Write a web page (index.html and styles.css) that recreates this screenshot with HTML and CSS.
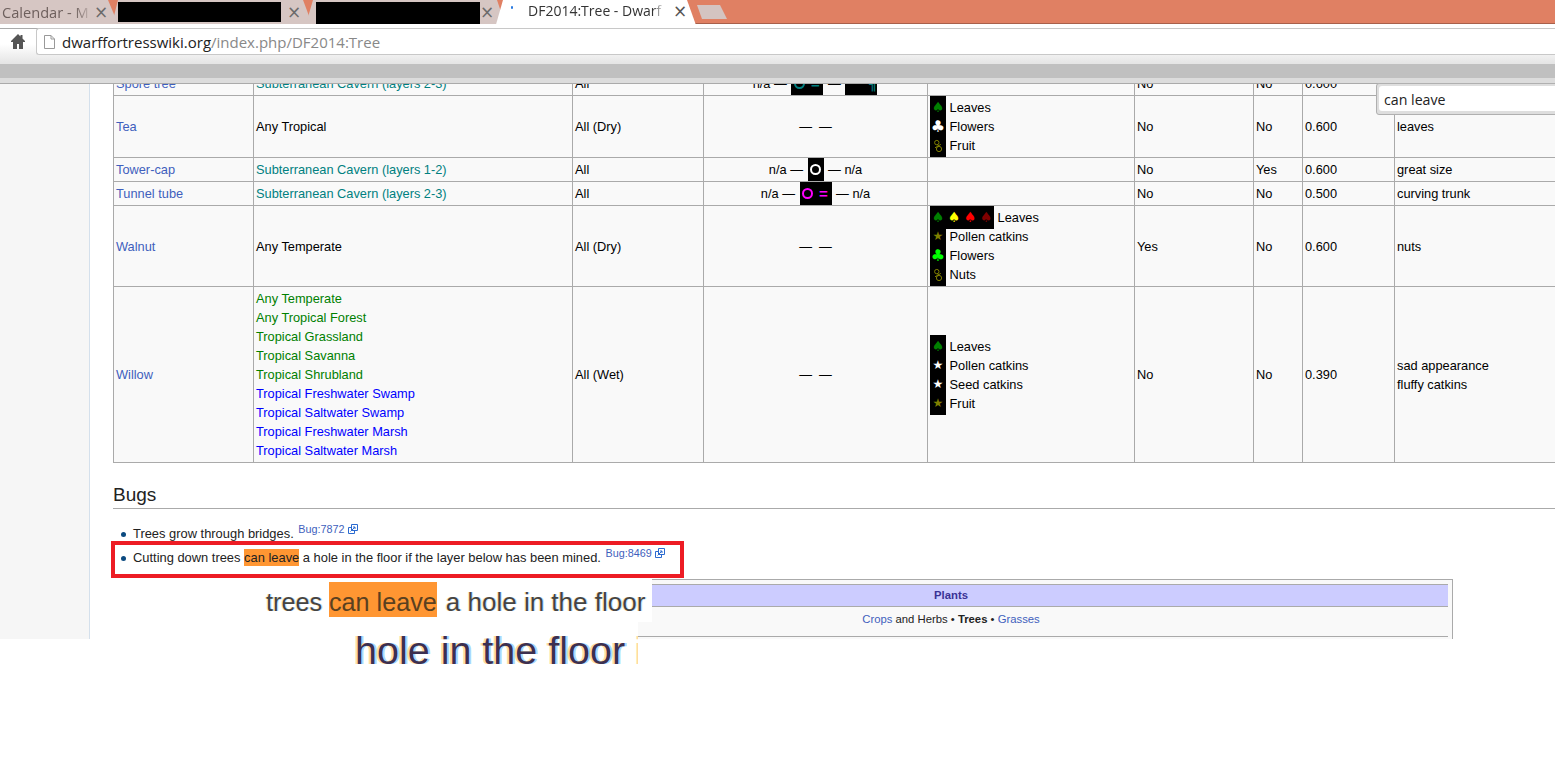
FILE: index.html
```html
<!DOCTYPE html>
<html lang="en">
<head>
<meta charset="utf-8">
<title>DF2014:Tree - Dwarf Fortress Wiki</title>
<link rel="stylesheet" href="styles.css">
</head>
<body>
<header class="tabstrip">
  <div class="tab tab-first"><span class="tab-title tab-title-short">Calendar - M</span><span class="tab-x">×</span></div>
  <div class="tab tab-second"><span class="redact redact-a"></span><span class="tab-x">×</span></div>
  <div class="tab tab-third"><span class="redact redact-b"></span><span class="tab-x">×</span></div>
  <div class="tab tab-active"><span class="spinner"></span><span class="tab-title tab-title-active">DF2014:Tree - Dwarf</span><span class="tab-x tab-x-active">×</span></div>
  <div class="newtab"></div>
</header>
<nav class="toolbar">
  <svg class="home" viewBox="0 0 14 15" width="14" height="15"><path d="M7 0 0 7v1h2v7h4v-5h2v5h4V8h2V7l-2.500-2.500V1H9.500v1.500z" fill="#555"/></svg>
  <div class="omnibox">
    <svg class="doc" viewBox="0 0 11 14" width="11" height="14"><path d="M.5.500h6.500l3.500 3.500v9.500h-10z M7 .5v3.500h3.500" fill="#fff" stroke="#999"/></svg>
    <span class="url"><span class="url-host">dwarffortresswiki.org</span>/index.php/DF2014:Tree</span>
  </div>
</nav>
<div class="barband"></div>
<main class="page">
  <aside class="sidebar"></aside>
  <div class="content">
    <table class="trees">
      <colgroup><col class="c1"><col class="c2"><col class="c3"><col class="c4"><col class="c5"><col class="c6"><col class="c7"><col class="c8"><col class="c9"></colgroup>
      <tr>
        <td><a class="lnk">Spore tree</a></td><td class="teal">Subterranean Cavern (layers 2-3)</td><td>All</td>
        <td class="ctr">n/a — <span class="tiles t-teal"><span class="cell"><span class="ring"></span></span><span class="cell eq">=</span></span> — <span class="tiles t-teal wide"><span class="cell"></span><span class="cell end">╣</span></span></td>
        <td></td><td>No</td><td>No</td><td>0.600</td><td></td>
      </tr>
      <tr>
        <td><a class="lnk">Tea</a></td><td>Any Tropical</td><td>All (Dry)</td><td class="ctr">— &nbsp;—</td>
        <td>
          <div><span class="tiles"><span class="cell g-green">♠</span></span> Leaves</div>
          <div><span class="tiles"><span class="cell club g-white">♣</span></span> Flowers</div>
          <div><span class="tiles"><span class="cell"><svg class="fruit" viewBox="0 0 10 14" width="10" height="14"><circle cx="3.800" cy="3.600" r="2.200"/><circle cx="6" cy="10" r="2.600"/><path d="M4.600 5.600 5.800 7.400M2 8.800 7.800 5.400"/></svg></span></span> Fruit</div>
        </td>
        <td>No</td><td>No</td><td>0.600</td><td>leaves</td>
      </tr>
      <tr>
        <td><a class="lnk">Tower-cap</a></td><td class="teal">Subterranean Cavern (layers 1-2)</td><td>All</td>
        <td class="ctr">n/a — <span class="tiles t-white"><span class="cell"><span class="ring"></span></span></span> — n/a</td>
        <td></td><td>No</td><td>Yes</td><td>0.600</td><td>great size</td>
      </tr>
      <tr>
        <td><a class="lnk">Tunnel tube</a></td><td class="teal">Subterranean Cavern (layers 2-3)</td><td>All</td>
        <td class="ctr">n/a — <span class="tiles t-magenta"><span class="cell"><span class="ring"></span></span><span class="cell eq">=</span></span> — n/a</td>
        <td></td><td>No</td><td>No</td><td>0.500</td><td>curving trunk</td>
      </tr>
      <tr>
        <td><a class="lnk">Walnut</a></td><td>Any Temperate</td><td>All (Dry)</td><td class="ctr">— &nbsp;—</td>
        <td>
          <div><span class="tiles"><span class="cell g-green">♠</span><span class="cell g-yellow">♠</span><span class="cell g-red">♠</span><span class="cell g-maroon">♠</span></span> Leaves</div>
          <div><span class="tiles"><span class="cell star g-olive">★</span></span> Pollen catkins</div>
          <div><span class="tiles"><span class="cell club g-lime">♣</span></span> Flowers</div>
          <div><span class="tiles"><span class="cell"><svg class="fruit" viewBox="0 0 10 14" width="10" height="14"><circle cx="3.800" cy="3.600" r="2.200"/><circle cx="6" cy="10" r="2.600"/><path d="M4.600 5.600 5.800 7.400M2 8.800 7.800 5.400"/></svg></span></span> Nuts</div>
        </td>
        <td>Yes</td><td>No</td><td>0.600</td><td>nuts</td>
      </tr>
      <tr>
        <td><a class="lnk">Willow</a></td>
        <td>
          <div class="green">Any Temperate</div>
          <div class="green">Any Tropical Forest</div>
          <div class="green">Tropical Grassland</div>
          <div class="green">Tropical Savanna</div>
          <div class="green">Tropical Shrubland</div>
          <div class="blue">Tropical Freshwater Swamp</div>
          <div class="blue">Tropical Saltwater Swamp</div>
          <div class="blue">Tropical Freshwater Marsh</div>
          <div class="blue">Tropical Saltwater Marsh</div>
        </td>
        <td>All (Wet)</td><td class="ctr">— &nbsp;—</td>
        <td>
          <div><span class="tiles"><span class="cell g-green">♠</span></span> Leaves</div>
          <div><span class="tiles"><span class="cell star g-white">★</span></span> Pollen catkins</div>
          <div><span class="tiles"><span class="cell star g-white">★</span></span> Seed catkins</div>
          <div><span class="tiles"><span class="cell star g-olive">★</span></span> Fruit</div>
        </td>
        <td>No</td><td>No</td><td>0.390</td><td><div>sad appearance</div><div>fluffy catkins</div></td>
      </tr>
    </table>
    <h2 class="section">Bugs</h2>
    <ul class="bugs">
      <li>Trees grow through bridges. <sup class="ref"><a class="lnk">Bug:7872</a> <svg class="ext" viewBox="0 0 10 10" width="10" height="10"><path d="M3.500.5h6v6h-6zM.5 3.500h3M.5 3.500v6h6v-3M2.500 7.500l4.500-4.500M5 3h2v2" fill="none" stroke="#2a6ad0"/></svg></sup></li>
      <li>Cutting down trees <mark class="hit">can leave</mark> a hole in the floor if the layer below has been mined. <sup class="ref"><a class="lnk">Bug:8469</a> <svg class="ext" viewBox="0 0 10 10" width="10" height="10"><path d="M3.500.5h6v6h-6zM.5 3.500h3M.5 3.500v6h6v-3M2.500 7.500l4.500-4.500M5 3h2v2" fill="none" stroke="#2a6ad0"/></svg></sup></li>
    </ul>
    <section class="navbox">
      <div class="navhead">Plants</div>
      <div class="navrow"><a class="lnk">Crops</a> and Herbs • <b class="nav-current">Trees</b> • <a class="lnk">Grasses</a></div>
      <div class="navrule"></div>
    </section>
  </div>
</main>
<div class="findbar"><div class="findinput">can leave</div></div>
<div class="callout"></div>
<div class="zoom zoom-two">trees <mark class="hit-big">can leave</mark> <span class="zoom-tail">a hole in the floor</span></div>
<div class="zoom zoom-three">hole in the floor if</div>
</body>
</html>
```

FILE: styles.css
```css
* { box-sizing: border-box; }
html, body { margin: 0; height: 759px; overflow: hidden; background: #fff; }
body { font-family: "Liberation Sans", Arial, sans-serif; font-size: 12.8px; color: #000; position: relative; }

/* tab strip */
.tabstrip { height: 24px; background: #e08063; border-bottom: 1px solid #a8604b; display: flex; align-items: flex-start; position: relative; }
.tab { height: 24px; background: #d6c6c3; display: flex; align-items: center; position: relative; font-family: "Open Sans", sans-serif; font-size: 14.6px; flex: none; }
.tab-first { width: 118px; margin-right: -6px; padding-left: 2px; clip-path: polygon(0 0, 108px 0, 118px 100%, 0 100%); z-index: 1; }
.tab-second { width: 200px; padding-left: 6px; clip-path: polygon(6px 0, calc(100% - 9px) 0, 100% 100%, 0 100%); margin-right: -6px; }
.tab-third { width: 199px; padding-left: 10px; clip-path: polygon(7px 0, calc(100% - 8px) 0, 100% 100%, 0 100%); margin-right: -10px; }
.tab-active { width: 202px; background: #fff; padding-left: 33px; clip-path: polygon(8px 0, calc(100% - 10px) 0, 100% 100%, 0 100%); height: 28px; z-index: 2; font-size: 14px; }
.tab-title { color: #6d5f5c; overflow: hidden; white-space: nowrap; display: block; flex: none; line-height: 22px; }
.tab-title-short { width: 86px; margin-top: -1px; -webkit-mask-image: linear-gradient(90deg, #000 85%, rgba(0,0,0,.25)); mask-image: linear-gradient(90deg, #000 85%, rgba(0,0,0,.25)); }
.tab-title-active { width: 136px; color: #333; margin-top: -6px; -webkit-mask-image: linear-gradient(90deg, #000 92%, transparent); mask-image: linear-gradient(90deg, #000 92%, transparent); }
.tab-x { color: #6b6b6b; font-family: "DejaVu Sans", sans-serif; font-size: 17px; line-height: 20px; margin-top: -1px; flex: none; position: absolute; }
.tab-first .tab-x { left: 94px; }
.tab-second .tab-x { left: 175px; }
.tab-third .tab-x { left: 174px; }
.tab-x-active { left: 178px; margin-top: -6px; color: #555; }
.redact { background: #000; display: block; flex: none; height: 20px; }
.redact-a { width: 163px; margin-top: -1px; }
.redact-b { width: 164px; margin-top: 1px; height: 22px; }
.spinner { position: absolute; left: 16px; top: 6px; width: 2px; height: 3px; background: #2a7ae0; border-radius: 1px; }
.newtab { width: 30px; height: 14px; margin-top: 5px; background: #d4c4c1; clip-path: polygon(0 0, 23px 0, 100% 100%, 5px 100%); flex: none; }

/* toolbar */
.toolbar { height: 40px; display: flex; align-items: flex-start; background: linear-gradient(#fff 0, #fff 50%, #e4e4e4 100%); padding: 4px 0 0 11px; position: relative; }
.toolbar::after { content: ""; position: absolute; left: 0; right: 0; top: 4px; height: 1px; background: #aaa; }
.home { margin: 6px 11px 0 0; flex: none; }
.omnibox { flex: 1; height: 27px; background: #fff; border: 1px solid #c8c8c8; border-right: 0; border-radius: 3px 0 0 3px; display: flex; align-items: center; padding-left: 7px; position: relative; z-index: 1; }
.doc { flex: none; margin-right: 7px; }
.url { font-family: "Open Sans", sans-serif; font-size: 15px; color: #888; white-space: nowrap; }
.url-host { color: #222; }
.barband { height: 20px; background: linear-gradient(#c0c0c0 0, #c0c0c0 14px, #dcdcdc 14px); border-bottom: 1px solid #aaa; }

/* page */
.page { height: 555px; display: flex; overflow: hidden; background: #fff; }
.sidebar { width: 90px; flex: none; background: #f6f6f6; border-right: 1px solid #d4e0ec; }
.content { flex: 1; min-width: 0; overflow: hidden; padding-left: 23px; }
.trees { table-layout: fixed; border-collapse: collapse; width: 1487px; margin-top: -13px; background: #f9f9f9; line-height: 19px; }
.trees td { border: 1px solid #aaa; padding: 2px; vertical-align: middle; white-space: nowrap; }
.c1 { width: 140px; } .c2 { width: 319px; } .c3 { width: 131px; } .c4 { width: 224px; } .c5 { width: 207px; }
.c6 { width: 119px; } .c7 { width: 49px; } .c8 { width: 92px; } .c9 { width: 206px; }
.ctr { text-align: center; }
.ctr .tiles { margin: 0 1px; }
.lnk { color: #3f5fbd; }
.teal { color: #008080; }
.green { color: #008000; }
.blue { color: #0000ff; }

.tiles { display: inline-flex; vertical-align: top; height: 19px; background: #000; box-shadow: 0 -2px 0 #000, 0 2px 0 #000; }
.cell { width: 16px; height: 19px; display: flex; align-items: center; justify-content: center; font-family: "DejaVu Sans", sans-serif; font-size: 14px; line-height: 19px; }
.club { font-size: 16px; }
.star { font-size: 12px; }
.wide { width: 32px; }
.end { justify-content: flex-end; }
.ring { display: block; width: 11px; height: 11px; border: 2.5px solid currentColor; border-radius: 50%; }
.eq { font-family: "Liberation Sans", sans-serif; font-weight: 700; font-size: 15px; }
.t-teal { color: #008080; }
.t-white { color: #fff; }
.t-magenta { color: #f0f; }
.g-green { color: #008000; } .g-white { color: #fff; } .g-yellow { color: #ff0; } .g-red { color: #f00; }
.g-maroon { color: #800000; } .g-olive { color: #808000; } .g-lime { color: #0f0; }
.fruit { display: block; fill: none; stroke: #808000; }

/* bugs */
.section { font-size: 19px; font-weight: 400; line-height: 24px; margin: 20px 0 0; padding-bottom: 1px; border-bottom: 1px solid #aaa; color: #222; }
.bugs { list-style: none; margin: 13px 0 0; padding: 0 0 0 20px; color: #222; font-size: 12.9px; }
.bugs li { height: 24px; line-height: 24px; position: relative; white-space: nowrap; }
.bugs li::before { content: ""; position: absolute; left: -12px; top: 10px; width: 5px; height: 5px; border-radius: 50%; background: #0b4a80; }
.hit { background: #ff9632; color: inherit; padding: 1px 0; }
.ref { font-size: 10.8px; line-height: 0; vertical-align: 5px; margin-left: 1px; }
.ext { vertical-align: -1px; }
.navbox { width: 1004px; margin: 9px 0 0 336px; border: 1px solid #aaa; background: #f9f9f9; padding: 4px; height: 70px; font-size: 11.3px; text-align: center; }
.navhead { height: 23px; background: #ccf; border: 1px solid #aaa; border-width: 1px 0; line-height: 21px; font-weight: 700; color: #3a3296; }
.navrow { line-height: 24px; color: #222; }
.nav-current { font-weight: 700; color: #222; }
.navrule { border-top: 1px solid #aaa; margin-top: 5px; }

/* overlays */
.findbar { position: absolute; left: 1376px; top: 83px; width: 200px; height: 32px; background: #dedede; border: 1px solid #b0b0b0; border-radius: 3px 0 0 3px; padding: 2px 0 0 2px; }
.findinput { height: 25px; background: #fff; border-radius: 3px; padding-left: 5px; font-family: "Open Sans", sans-serif; font-size: 14.2px; line-height: 28px; color: #222; }
.callout { position: absolute; left: 111px; top: 541px; width: 573px; height: 37px; border: 4px solid #ed1c24; }
.zoom { position: absolute; background: #fff; font-family: "Liberation Sans", sans-serif; white-space: nowrap; overflow: hidden; color: #444; }
.zoom-two { left: 260px; top: 578px; width: 392px; height: 44px; padding: 3px 0 0 6px; font-size: 25.2px; line-height: 42px; text-shadow: -1px 0 #ffe6b0, 1px 0 #bfe2ff; }
.zoom-tail { font-size: 26px; margin-left: 2px; }
.hit-big { background: #ff9632; color: #5a4020; text-shadow: none; padding: 6px 0 1px; }
.zoom-three { left: 355px; top: 622px; width: 283px; height: 44px; font-size: 39.5px; line-height: 56px; color: #3c3050; text-shadow: -2px 0 #ffdca0, 2px 0 #a8d8ff; }
```
